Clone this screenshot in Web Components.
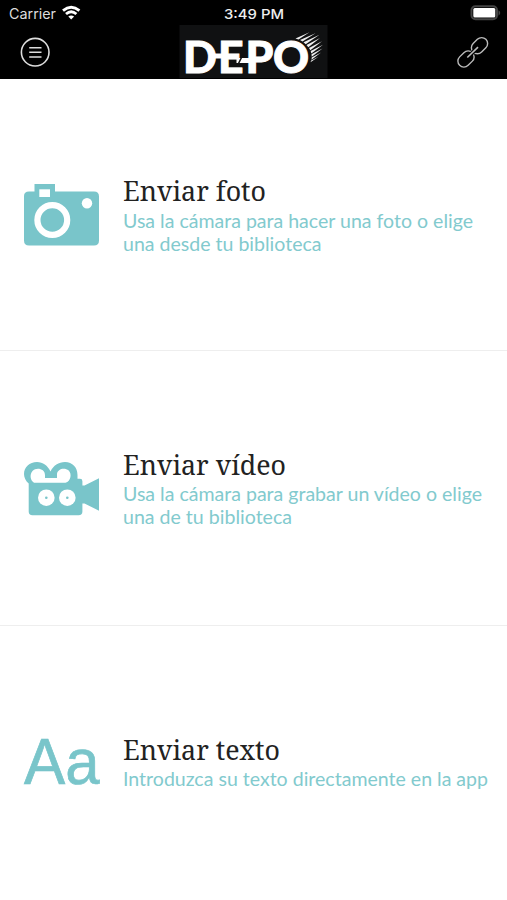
<!DOCTYPE html>
<html lang="es"><head><meta charset="utf-8"><title>DEPO</title>
<style>html,body{margin:0;background:#fff}</style></head><body><depo-app></depo-app>
<script>
const define=(name,html)=>customElements.define(name,class extends HTMLElement{
  constructor(){super();const t=document.createElement('template');t.innerHTML=html;
    this.attachShadow({mode:'open'}).append(t.content.cloneNode(true));}
});

/* One line of text fitted to an exact advance width. */
customElements.define('fitted-line',class extends HTMLElement{
  connectedCallback(){
    if(this.shadowRoot)return;
    const w=this.getAttribute('w'),h=this.getAttribute('h'),b=this.getAttribute('base');
    this.attachShadow({mode:'open'}).innerHTML=`<style>:host{display:block}svg{display:block;overflow:visible}text{fill:currentColor;stroke:currentColor;stroke-width:var(--line-stroke,0)}</style>
    <svg width="${w}" height="${h}"><text x="0" y="${b}" textLength="${w}" lengthAdjust="spacingAndGlyphs"></text></svg>`;
    this.shadowRoot.querySelector('text').textContent=this.getAttribute('text');
  }
});

define('status-bar',`<style>
:host{display:grid;grid-template-columns:1fr auto 1fr;height:25px;color:#eee;box-sizing:border-box;padding:5px 8px 0 9px}
.l{display:flex;gap:6px}.r{display:flex;justify-content:flex-end}
.r svg{margin-right:-3px}
svg{display:block;overflow:visible}.l fitted-line{font:14px Inter,sans-serif;color:#ddd}
.c{font:500 13.5px Inter,sans-serif}</style>
<div class="l"><fitted-line text="Carrier" w="47" h="18" base="14"></fitted-line>
<svg width="19" height="16" viewBox="0 0 19 16" fill="none" stroke="#fff" stroke-width="2.9"><path d="M1 5.6Q9.2-1 17.4 5.6M4 9Q9.2 4.6 14.4 9"/><path d="M6.3 11.4Q9.2 9.4 12.1 11.4L9.2 14.5Z" fill="#fff" stroke="none"/></svg></div>
<fitted-line class="c" text="3:49 PM" w="60" h="18" base="13.7"></fitted-line>
<div class="r"><svg width="32" height="16" viewBox="0 0 32 16"><rect x="1.5" y="1.3" width="25.5" height="13" rx="4" fill="#000" stroke="#444" stroke-width="2"/><rect x="3.3" y="3" width="22" height="9.6" rx="1.5" fill="#fff"/><path d="M28.5 5.3Q32 8 28.5 10.8Z" fill="#444"/></svg></div>`);

define('depo-logo',`<style>:host{display:block;width:148px;height:53px;background:#101112}svg{display:block;overflow:visible}
text{font:900 44.5px Lato,sans-serif;fill:#fff;stroke:#fff;stroke-width:.9}</style>
<svg width="148" height="53" viewBox="179 25 148 53"><text y="72.5" x="182.5 217.6 245 272.4">DEPO</text>
<path d="M212 56H222M236 60.5H250" stroke="#fff" stroke-width="5"/><path d="M242.5 54.5L237.5 64.5" stroke="#101112" stroke-width="1.6"/>
<g fill="#eee"><path d="M295 38.4L309 32.3 298 39.6ZM299.5 40L315 33.2 302 41.5ZM303 42.3L319 34.8 305.2 44.3ZM306 45L319.5 38 307.8 47.3ZM308.5 48L321.5 41.2 309.8 50.3ZM310.2 51L322.5 44.7 310.8 53.5ZM311 54.2L322 48.6 311.2 56.8ZM311.2 57.5L320.5 52.6 311 59.7ZM310.7 60.5L318 56.7 310 62.3Z"/></g></svg>`);

define('nav-bar',`<style>:host{display:grid;grid-template-columns:1fr 148px 1fr;height:54px;box-sizing:border-box;padding:0 18px 0 18px}
depo-logo{transform:translateX(-.5px)}svg{display:block}.m{padding:11px 0 0 1px}.k{justify-self:end;padding-top:11px}</style>
<div class="m"><svg width="32" height="32" viewBox="0 0 32 32" fill="none" stroke="#ddd"><circle cx="16.2" cy="16.2" r="13.8" stroke-width="1.6"/><path d="M10.2 11.7H22.5M10.2 16.3H22.5M10.2 20.9H22.5" stroke-width="1.5"/></svg></div>
<depo-logo></depo-logo>
<div class="k"><svg width="32" height="32" viewBox="457 36 32 32" fill="none" stroke="#bbb" stroke-width="1.4"><rect x="-9" y="-6" width="18" height="12" rx="6" transform="translate(479.5 45.7) rotate(-45)"/><rect x="-9" y="-6" width="18" height="12" rx="6" transform="translate(466 59) rotate(-45)"/><path d="M468.5 56.5L477 48.4" stroke="#000" stroke-width="4"/><path d="M467.3 57.5L478 47.2" stroke-width="1.6"/></svg></div>`);

define('option-row',`<style>:host{display:flex;box-sizing:border-box;align-items:center;gap:24px;padding-left:24px;border-bottom:1px solid #eee}
:host(:last-of-type){border:0}.icon{width:75px;flex:none}.copy{padding-top:var(--copy-shift,4px)}</style><div class="icon"><slot name="icon"></slot></div><div class="copy"><slot></slot></div>`);

define('camera-icon',`<style>:host,svg{display:block}</style><svg width="75" height="62" viewBox="24 184 75 62"><path fill="#79c5ca" d="M34.5 184H55V191.5H94Q99 191.5 99 196.5V240.5Q99 245.5 94 245.5H29Q24 245.5 24 240.5V196Q24 191.5 29 191.5H34.5Z"/><path fill="#fff" d="M39.3 189.3H50V197H39.3Z"/><circle cx="52.3" cy="220" r="14.9" fill="none" stroke="#fff" stroke-width="6.2"/><circle cx="87" cy="203.3" r="5.2" fill="#fff"/></svg>`);

define('video-icon',`<style>:host,svg{display:block}:host{padding-top:2px}</style><svg width="75" height="54" viewBox="24 462 75 54"><path fill="#79c5ca" d="M28.7 483.6C25.6 480.8 24 477.5 24 474C24 467 29.5 462 37 462C43 462 47.5 465.5 50.5 471.5C53.5 465.5 58.5 462 65 462C72.5 462 77.5 467.5 77.5 475V478.8H80Q82.4 478.8 82.4 481.2V485.5H84.5L99 478.3V510.7L84.5 503.5H82.4V511.5Q82.4 515.3 78.5 515.3H32.5Q28.7 515.3 28.7 511.5Z"/><path fill="#fff" d="M34 482.8C29.7 480 29.8 473.8 32.5 471C36.3 467 45 468.5 45 475.2V478H57V474C57.5 468.8 64.5 467 68.7 470.5C72 473.8 71 481.3 65.5 482.8Z"/><circle cx="46.3" cy="497.7" r="8.3" fill="#fff"/><circle cx="67.3" cy="497.7" r="8.3" fill="#fff"/><circle cx="46.3" cy="497.7" r="1.3" fill="#79c5ca"/><circle cx="67.3" cy="497.7" r="1.3" fill="#79c5ca"/></svg>`);

define('type-icon',`<style>:host{display:block;color:#79c5ca;font:64px "Liberation Sans",sans-serif;--line-stroke:.7px}</style><fitted-line text="Aa" w="75.5" h="46" base="44.4"></fitted-line>`);

define('depo-app',`<style>:host{display:grid;grid-template-rows:79px 272px 275px 274px;height:900px;background:#fff}
header{background:#000}
.t{color:#222;font:26.5px "Noto Serif","Droid Serif","DejaVu Serif Condensed",serif}
.d{color:#82cace;font:19.6px Lato,sans-serif}</style>
<header><status-bar></status-bar><nav-bar></nav-bar></header>
<option-row><camera-icon slot="icon"></camera-icon><fitted-line class="t" text="Enviar foto" w="143" h="32" base="23"></fitted-line><fitted-line class="d" text="Usa la cámara para hacer una foto o elige" w="350" h="23" base="17.7"></fitted-line><fitted-line class="d" text="una desde tu biblioteca" w="198.5" h="23" base="17.7"></fitted-line></option-row>
<option-row style="--copy-shift:5px"><video-icon slot="icon"></video-icon><fitted-line class="t" text="Enviar vídeo" w="163" h="32" base="22.5"></fitted-line><fitted-line class="d" text="Usa la cámara para grabar un vídeo o elige" w="359" h="23" base="17.4"></fitted-line><fitted-line class="d" text="una de tu biblioteca" w="169" h="23" base="17.4"></fitted-line></option-row>
<option-row style="--copy-shift:2px"><type-icon slot="icon"></type-icon><fitted-line class="t" text="Enviar texto" w="157" h="32" base="22.5"></fitted-line><fitted-line class="d" text="Introduzca su texto directamente en la app" w="365" h="23" base="17.4"></fitted-line></option-row>`);
</script></body></html>
